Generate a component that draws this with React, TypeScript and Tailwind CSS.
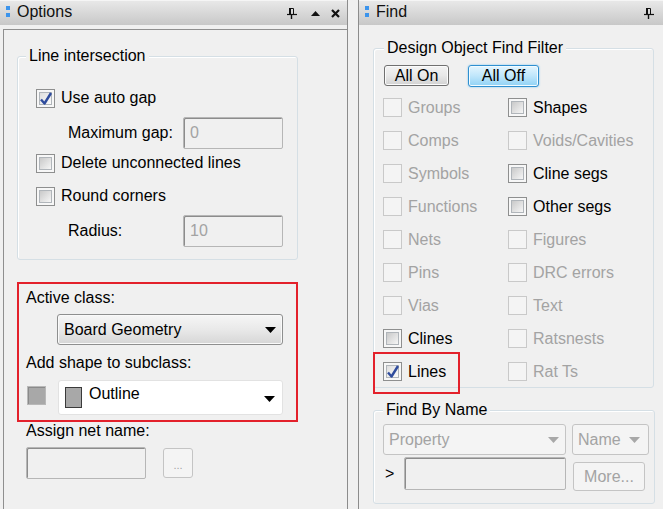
import React from "react";

type CheckState = "disabled" | "off" | "checked";

function CheckBox({ state }: { state: CheckState }) {
  if (state === "disabled") {
    return <span className="block w-[19px] h-[19px] shrink-0 border border-[#c9c9c9] bg-[#f4f4f4]" />;
  }
  return (
    <span className="relative block w-[19px] h-[19px] shrink-0 border border-[#8e8f8f] bg-[#f7f7f7] p-[2px]">
      <span
        className={`block w-full h-full border border-[#b0b5ba] bg-linear-to-br ${
          state === "checked" ? "from-[#dedede] to-[#fbfbfb]" : "from-[#c9c9c9] to-[#f6f6f6]"
        }`}
      />
      {state === "checked" && (
        <svg className="absolute left-[2px] top-[1px]" width="14" height="15" viewBox="0 0 14 15">
          <path d="M2 8.5 L5.5 12.5 L12 2" fill="none" stroke="#2f4c9d" strokeWidth="2.4" strokeLinejoin="round" />
        </svg>
      )}
    </span>
  );
}

function DownArrow({ color = "#000" }: { color?: string }) {
  return (
    <svg width="11" height="6" viewBox="0 0 11 6">
      <path d="M0 0h11L5.5 6z" fill={color} />
    </svg>
  );
}

function PinIcon() {
  return (
    <svg width="10" height="11" viewBox="0 0 10 11">
      <rect x="2" y="0" width="2" height="6" fill="#111" />
      <path d="M3.5 0.5h3v5.5" fill="none" stroke="#111" strokeWidth="1" />
      <path d="M0 6.5h10" stroke="#111" strokeWidth="1.2" />
      <path d="M4.5 7v4" stroke="#111" strokeWidth="1.4" />
    </svg>
  );
}

function PanelHeader({ title, children }: { title: string; children: React.ReactNode }) {
  return (
    <div className="h-[25px] shrink-0 flex items-center bg-linear-to-b from-[#e8e8e8] to-[#c8c8c8] border-t border-[#f5f5f5]">
      <div className="ml-[6px] flex flex-col gap-[3px] -mt-[3px]">
        <span className="block w-[4px] h-[4px] bg-[#3c94ec]" />
        <span className="block w-[4px] h-[4px] bg-[#3c94ec]" />
      </div>
      <span className="ml-[7px] leading-[18px] -mt-[3px] text-[#111]">{title}</span>
      <div className="ml-auto flex items-center">{children}</div>
    </div>
  );
}

function SunkenInput({ className, value }: { className: string; value?: string }) {
  return (
    <div
      className={`border border-[#b6b6b6] rounded-[2px] bg-[#f0f0f0] shadow-[inset_1px_1px_0_#8c8c8c] pl-[6px] flex items-center text-[#a3a3a3] ${className}`}
    >
      {value}
    </div>
  );
}

function OptRow({ state, label }: { state: CheckState; label: string }) {
  return (
    <div className="h-[20px] flex items-center gap-[6px]">
      <CheckBox state={state} />
      <span className="leading-[18px]">{label}</span>
    </div>
  );
}

function FindItem({ label, state }: { label: string; state: CheckState }) {
  return (
    <div className="h-[33px] flex items-center gap-[6px]">
      <CheckBox state={state} />
      <span className={`leading-[18px] ${state === "disabled" ? "text-[#a3a3a3]" : "text-black"}`}>{label}</span>
    </div>
  );
}

const left: [string, CheckState][] = [
  ["Groups", "disabled"],
  ["Comps", "disabled"],
  ["Symbols", "disabled"],
  ["Functions", "disabled"],
  ["Nets", "disabled"],
  ["Pins", "disabled"],
  ["Vias", "disabled"],
  ["Clines", "off"],
  ["Lines", "checked"],
];

const right: [string, CheckState][] = [
  ["Shapes", "off"],
  ["Voids/Cavities", "disabled"],
  ["Cline segs", "off"],
  ["Other segs", "off"],
  ["Figures", "disabled"],
  ["DRC errors", "disabled"],
  ["Text", "disabled"],
  ["Ratsnests", "disabled"],
  ["Rat Ts", "disabled"],
];

export default function App() {
  return (
    <div className="w-[663px] h-[509px] overflow-hidden flex bg-[#f0f0f0] text-[16px] text-black font-['Liberation_Sans',Arial,sans-serif]">
      {/* Options panel */}
      <div className="w-[348px] h-full shrink-0 border-r border-[#8c8c8c] flex flex-col">
        <PanelHeader title="Options">
          <PinIcon />
          <svg className="ml-[14px]" width="9" height="5" viewBox="0 0 9 5">
            <path d="M0 5L4.5 0L9 5z" fill="#111" />
          </svg>
          <svg className="ml-[11px] mr-[7px]" width="9" height="9" viewBox="0 0 9 9">
            <path d="M1 1L8 8M8 1L1 8" stroke="#111" strokeWidth="2.2" />
          </svg>
        </PanelHeader>

        <div className="mt-[4px] ml-[3px] flex-1 border-l border-t border-[#8f8f8f] flex flex-col">
          {/* Line intersection */}
          <div className="relative mt-[26px] ml-[13px] w-[281px] h-[204px] shrink-0 border border-[#d5dfe5] rounded-[3px] shadow-[inset_1px_1px_0_#fff]">
            <span className="absolute -top-[10px] left-[8px] px-[3px] bg-[#f0f0f0] leading-[18px]">Line intersection</span>
            <div className="pt-[31px] pl-[18px] flex flex-col">
              <OptRow state="checked" label="Use auto gap" />
              <div className="mt-[9px] h-[32px] flex items-center pl-[32px]">
                <span className="w-[115px] leading-[18px]">Maximum gap:</span>
                <SunkenInput className="w-[100px] h-[32px]" value="0" />
              </div>
              <div className="mt-[4px]">
                <OptRow state="off" label="Delete unconnected lines" />
              </div>
              <div className="mt-[13px]">
                <OptRow state="off" label="Round corners" />
              </div>
              <div className="mt-[9px] h-[32px] flex items-center pl-[32px]">
                <span className="w-[115px] leading-[18px]">Radius:</span>
                <SunkenInput className="w-[100px] h-[32px]" value="10" />
              </div>
            </div>
          </div>

          {/* Highlighted class section */}
          <div className="mt-[22px] ml-[13px] w-[281px] h-[140px] shrink-0 border-2 border-[#e3212b] flex flex-col">
            <span className="mt-[4px] pl-[7px] leading-[20px]">Active class:</span>
            <div className="mt-[6px] ml-[38px] w-[226px] h-[31px] rounded-[3px] border border-[#8e8f8f] bg-linear-to-b from-[#f6f6f6] via-[#e9e9e9] to-[#d6d6d6] shadow-[inset_0_0_0_1px_#fafafa] flex items-center pl-[6px] pr-[6px]">
              <span className="leading-[18px]">Board Geometry</span>
              <span className="ml-auto">
                <DownArrow />
              </span>
            </div>
            <span className="mt-[8px] pl-[7px] leading-[20px]">Add shape to subclass:</span>
            <div className="mt-[7px] flex items-start">
              <span className="mt-[6px] ml-[8px] block w-[19px] h-[19px] border border-[#b8b8b8] bg-[#a8a8a8] shadow-[inset_1px_1px_0_#8a8a8a]" />
              <div className="ml-[12px] w-[225px] h-[35px] rounded-[3px] border border-[#e2e2e2] bg-white flex items-start pl-[6px] pr-[7px]">
                <span className="mt-[6px] block w-[17px] h-[21px] border border-[#3a3a3a] bg-[#a8a8a8]" />
                <span className="mt-[4px] ml-[7px] leading-[18px]">Outline</span>
                <span className="ml-auto mt-[15px]">
                  <DownArrow />
                </span>
              </div>
            </div>
          </div>

          <span className="ml-[22px] leading-[18px]">Assign net name:</span>
          <div className="mt-[7px] ml-[22px] flex items-center">
            <SunkenInput className="w-[120px] h-[32px]" />
            <div className="ml-[17px] w-[30px] h-[30px] rounded-[3px] border border-[#c4c4c4] bg-[#f4f4f4] flex items-center justify-center text-[#a3a3a3] text-[11px] leading-[11px] pt-[4px]">
              ...
            </div>
          </div>
        </div>
      </div>

      <div className="w-[10px] shrink-0" />

      {/* Find panel */}
      <div className="flex-1 h-full border-l border-[#8c8c8c] flex flex-col">
        <PanelHeader title="Find">
          <span className="mr-[9px] flex">
            <PinIcon />
          </span>
        </PanelHeader>

        <div className="relative mt-[23px] ml-[14px] w-[281px] h-[340px] shrink-0 border border-[#d5dfe5] rounded-[3px] shadow-[inset_1px_1px_0_#fff]">
          <span className="absolute -top-[10px] left-[10px] px-[3px] bg-[#f0f0f0] leading-[18px]">Design Object Find Filter</span>
          <div className="pt-[16px] pl-[10px] flex items-start gap-[19px]">
            <div className="w-[65px] h-[21px] rounded-[3px] border border-[#707070] bg-linear-to-b from-[#f3f3f3] via-[#e8e8e8] to-[#d2d2d2] shadow-[inset_0_0_0_1px_#fbfbfb] flex items-center justify-center leading-[18px]">
              All On
            </div>
            <div className="w-[71px] h-[22px] rounded-[3px] border border-[#2f8fd0] bg-linear-to-b from-[#e4f5fe] via-[#bfe6fb] to-[#8fd2f5] shadow-[0_0_2px_#6fc2f0,inset_0_0_0_1px_#f2fbff] flex items-center justify-center leading-[18px]">
              All Off
            </div>
          </div>
          <div className="mt-[4px] pl-[9px] grid grid-cols-[125px_1fr]">
            <div className="flex flex-col">
              {left.map(([l, s]) => (
                <FindItem key={l} label={l} state={s} />
              ))}
            </div>
            <div className="flex flex-col">
              {right.map(([l, s]) => (
                <FindItem key={l} label={l} state={s} />
              ))}
            </div>
          </div>
          <div className="absolute left-[-1px] top-[303px] w-[87px] h-[42px] border-2 border-[#e3212b]" />
        </div>

        <div className="relative mt-[22px] ml-[14px] w-[282px] h-[94px] shrink-0 border border-[#d5dfe5] rounded-[3px] shadow-[inset_1px_1px_0_#fff]">
          <span className="absolute -top-[10px] left-[9px] px-[3px] bg-[#f0f0f0] leading-[18px]">Find By Name</span>
          <div className="pt-[13px] pl-[9px] flex gap-[6px]">
            <div className="w-[183px] h-[31px] rounded-[3px] border border-[#c4c4c4] bg-[#f4f4f4] flex items-center pl-[5px] pr-[6px] text-[#a3a3a3]">
              <span className="leading-[18px]">Property</span>
              <span className="ml-auto">
                <DownArrow color="#a8a8a8" />
              </span>
            </div>
            <div className="w-[77px] h-[31px] rounded-[3px] border border-[#c4c4c4] bg-[#f4f4f4] flex items-center pl-[5px] pr-[8px] text-[#a3a3a3]">
              <span className="leading-[18px]">Name</span>
              <span className="ml-auto">
                <DownArrow color="#a8a8a8" />
              </span>
            </div>
          </div>
          <div className="mt-[2px] pl-[9px] flex items-start">
            <span className="w-[21px] pl-[2px] mt-[8px] leading-[18px]">&gt;</span>
            <SunkenInput className="w-[162px] h-[33px]" />
            <div className="ml-[7px] mt-[5px] w-[72px] h-[29px] rounded-[3px] border border-[#c4c4c4] bg-[#f4f4f4] flex items-center justify-center text-[#a3a3a3] leading-[18px]">
              More...
            </div>
          </div>
        </div>
      </div>
    </div>
  );
}
